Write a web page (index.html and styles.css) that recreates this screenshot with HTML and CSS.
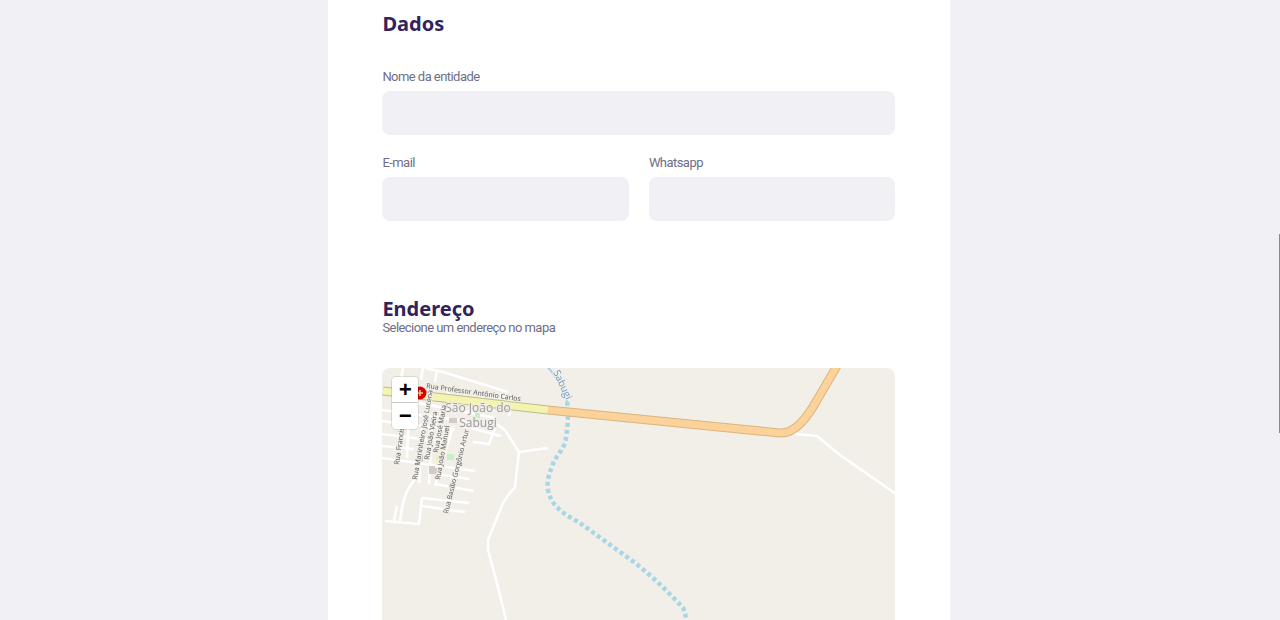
FILE: index.html
```html
<!DOCTYPE html>
<html lang="pt-BR">
<head>
  <meta charset="UTF-8">
  <title>Cadastro de entidade</title>
  <link rel="stylesheet" href="styles.css">
</head>
<body>
  <div class="scroll-thumb"></div>
  <main class="page">
    <form class="card">
      <section class="block">
        <h2>Dados</h2>
        <div class="field">
          <label for="nome">Nome da entidade</label>
          <input type="text" id="nome">
        </div>
        <div class="row">
          <div class="field">
            <label for="email">E-mail</label>
            <input type="text" id="email">
          </div>
          <div class="field">
            <label for="whatsapp">Whatsapp</label>
            <input type="text" id="whatsapp">
          </div>
        </div>
      </section>

      <section class="block block-address">
        <h2>Endereço</h2>
        <p class="hint">Selecione um endereço no mapa</p>
        <div class="map">
          <svg class="map-tiles" viewBox="-1 0 513 400" width="513" height="400">
            <!-- rio -->
            <path class="river-solid" d="M163,-3 C170,5 178,14 184,34"/>
            <path class="river" d="M184,34 C186,45 185,60 182,75 C178,85 171,90 169,99 C165,108 164,115 165,122 C167,130 170,136 175,140 C182,147 190,151 197,155 L237,184 C250,193 260,201 270,210 C281,220 291,230 300,240 C302,244 303,248 303,254"/>

            <!-- ruas da cidade -->
            <g class="street">
              <path d="M2,153 L36,156"/>
              <path d="M14,138 L11,153"/>
              <path d="M39,130 L36,156"/>
              <path d="M39,130 L86,135"/>
              <path d="M39,138 L82,144"/>
              <path d="M52,116 L91,123"/>
              <path d="M54,106 L86,111"/>
              <path d="M-1,90 L92,103"/>
              <path d="M-1,78 L31,81"/>
              <path d="M-1,66 L62,74"/>
              <path d="M-1,53 L72,62"/>
              <path d="M-1,42 L90,54"/>
              <path d="M10,30 L112,50"/>
              <path d="M32,111 C26,118 21,128 19,140 L17,153"/>
              <path d="M39,60 L36,115"/>
              <path d="M49,56 L46,116"/>
              <path d="M70,58 L52,118"/>
              <path d="M84,56 L74,100"/>
              <path d="M26,40 L24,90"/>
              <path d="M42,0 L60,4 L125,24"/>
              <path d="M20,0 L18,12"/>
              <path d="M40,0 L38,12"/>
              <path d="M54,2 L52,14"/>
              <path d="M66,20 L64,34"/>
              <path d="M82,22 L80,38"/>
              <path d="M100,24 L98,38"/>
              <path d="M112,26 L110,40"/>
              <path d="M128,32 L126,48"/>
              <path d="M90,74 L106,76 L112,60"/>
              <path d="M88,60 L118,68"/>
            </g>
            <g class="road">
              <path d="M108,52 L122,62 L136,84 L165,80"/>
              <path d="M136,84 L132,119 C128,124 124,128 120,135 L105,172 L105,182 L114,215 L123,252"/>
              <path d="M412,66 L434,68 L457,87 L513,126"/>
            </g>

            <!-- areas -->
            <rect class="park" x="64" y="86" width="7" height="6"/>
            <rect class="park" x="92" y="45" width="5" height="5"/>
            <rect class="yard" x="53" y="87" width="5" height="6"/>
            <rect class="built" x="46" y="98" width="6" height="8"/>
            <rect class="built" x="49" y="100" width="5" height="6"/>
            <rect class="built" x="36" y="86" width="4" height="8"/>
            <rect class="built" x="66" y="50" width="8" height="5"/>

            <!-- rodovia -->
            <path class="primary-case" d="M0,23 L165,42"/>
            <path class="primary" d="M0,23 L165,42"/>
            <path class="trunk-case" d="M165,42 L397,65 C412,66 424,50 434,32 L454,-2"/>
            <path class="trunk" d="M165,42 L397,65 C412,66 424,50 434,32 L454,-2"/>

            <!-- marcador -->
            <circle class="pin" cx="37" cy="25" r="6.5"/>
            <path class="pin-cross" d="M37,22 V28 M34,25 H40"/>

            <!-- nomes -->
            <text class="label-town" x="95" y="44" text-anchor="middle">São João do</text>
            <text class="label-town" x="95" y="59" text-anchor="middle">Sabugi</text>
            <text class="label-street" transform="translate(43,20) rotate(8)">Rua Professor Antônio Carlos</text>
            <text class="label-street" transform="translate(16,97) rotate(-82)">Rua Francis</text>
            <text class="label-street" transform="translate(34,112) rotate(-80)">Rua Marinheiro José Lucena</text>
            <text class="label-street" transform="translate(46,92) rotate(-80)">Rua João Vieira</text>
            <text class="label-street" transform="translate(55,85) rotate(-80)">Rua José Maria</text>
            <text class="label-street" transform="translate(57,112) rotate(-80)">Rua João Manuel</text>
            <text class="label-street" transform="translate(65,146) rotate(-76)">Rua Basílio Gorgônio Artur</text>
            <text class="label-river" transform="translate(170,4) rotate(65)">Sabugi</text>
          </svg>
          <div class="zoom-control">
            <a class="zoom-btn">+</a>
            <a class="zoom-btn">−</a>
          </div>
        </div>
      </section>
    </form>
  </main>
</body>
</html>
```

FILE: styles.css
```css
html, body {
  margin: 0;
  height: 620px;
  overflow: hidden;
}

body {
  background: #f0f0f5;
  font-family: Roboto, Arial, sans-serif;
}

.scroll-thumb {
  position: fixed;
  top: 234px;
  right: 0;
  width: 1px;
  height: 199px;
  background: #8a8a8a;
}

.page {
  display: flex;
  justify-content: center;
  padding-right: 2px;
}

.card {
  width: 513px;
  padding: 0 54.6px 0 54.4px;
  background: white;
}

h2 {
  margin: 0;
  font-family: "Noto Sans", sans-serif;
  font-size: 20px;
  line-height: 24px;
  font-weight: 700;
  color: #32235c;
}

.block {
  padding-top: 12px;
}

.block-address {
  padding-top: 76px;
}

.field {
  flex: 1;
  margin-top: 14px;
}

.block > h2 + .field {
  margin-top: 33px;
}

label {
  display: block;
  margin-bottom: 7px;
  font-size: 13px;
  line-height: 15px;
  letter-spacing: -0.55px;
  color: #706e86;
}

input {
  display: block;
  box-sizing: border-box;
  width: 100%;
  height: 44px;
  border: none;
  border-radius: 8px;
  background: #f0f0f5;
}

.row {
  display: flex;
  gap: 20px;
  margin-top: 6px;
}

.hint {
  margin: -1px 0 0;
  font-size: 13px;
  line-height: 15px;
  letter-spacing: -0.55px;
  color: #706e86;
}

.map {
  position: relative;
  height: 400px;
  margin-top: 33px;
  background: #f2efe9;
  border-radius: 8px;
  overflow: hidden;
}

.map-tiles {
  display: block;
  filter: blur(0.4px);
}

.map-tiles path {
  fill: none;
}

.river-solid {
  stroke: #a5d3e4;
  stroke-width: 2;
}

.river {
  stroke: #a9d6e5;
  stroke-width: 4.5;
  stroke-dasharray: 4 3;
}

.street path {
  stroke: white;
  stroke-width: 2.6;
}

.road path {
  stroke: white;
  stroke-width: 2.5;
  stroke-linejoin: round;
}

.park {
  fill: #c8f0c8;
}

.yard {
  fill: #f1f0a8;
}

.built {
  fill: #d4ccc4;
}

.primary-case {
  stroke: #bdbc84;
  stroke-width: 9;
}

.primary {
  stroke: #f2f4b0;
  stroke-width: 7;
}

.trunk-case {
  stroke: #dcb47c;
  stroke-width: 9;
}

.trunk {
  stroke: #fcd29b;
  stroke-width: 7;
}

.pin {
  fill: #d40000;
}

.map-tiles .pin-cross {
  stroke: #f5c88a;
  stroke-width: 1.5;
}

.map-tiles text {
  paint-order: stroke;
  stroke: #f2efe9;
  stroke-width: 2px;
  font-family: "Open Sans", sans-serif;
}

.label-town {
  font-size: 12px;
  fill: #999;
}

.label-street {
  font-size: 7px;
  fill: #555;
}

.label-river {
  font-size: 10px;
  fill: #6a9cc8;
}

.zoom-control {
  position: absolute;
  top: 9px;
  left: 10px;
  border-radius: 4px;
  box-shadow: 0 0 0 1px rgba(0, 0, 0, 0.1);
}

.zoom-btn {
  display: block;
  width: 26px;
  height: 26px;
  box-sizing: border-box;
  background: white;
  border-bottom: 1px solid #ccc;
  font-family: "Liberation Mono", monospace;
  font-size: 22px;
  font-weight: 700;
  line-height: 30px;
  text-align: center;
  color: black;
  overflow: hidden;
}

.zoom-btn:first-child {
  border-radius: 4px 4px 0 0;
}

.zoom-btn:last-child {
  border-bottom: none;
  border-radius: 0 0 4px 4px;
}
```
